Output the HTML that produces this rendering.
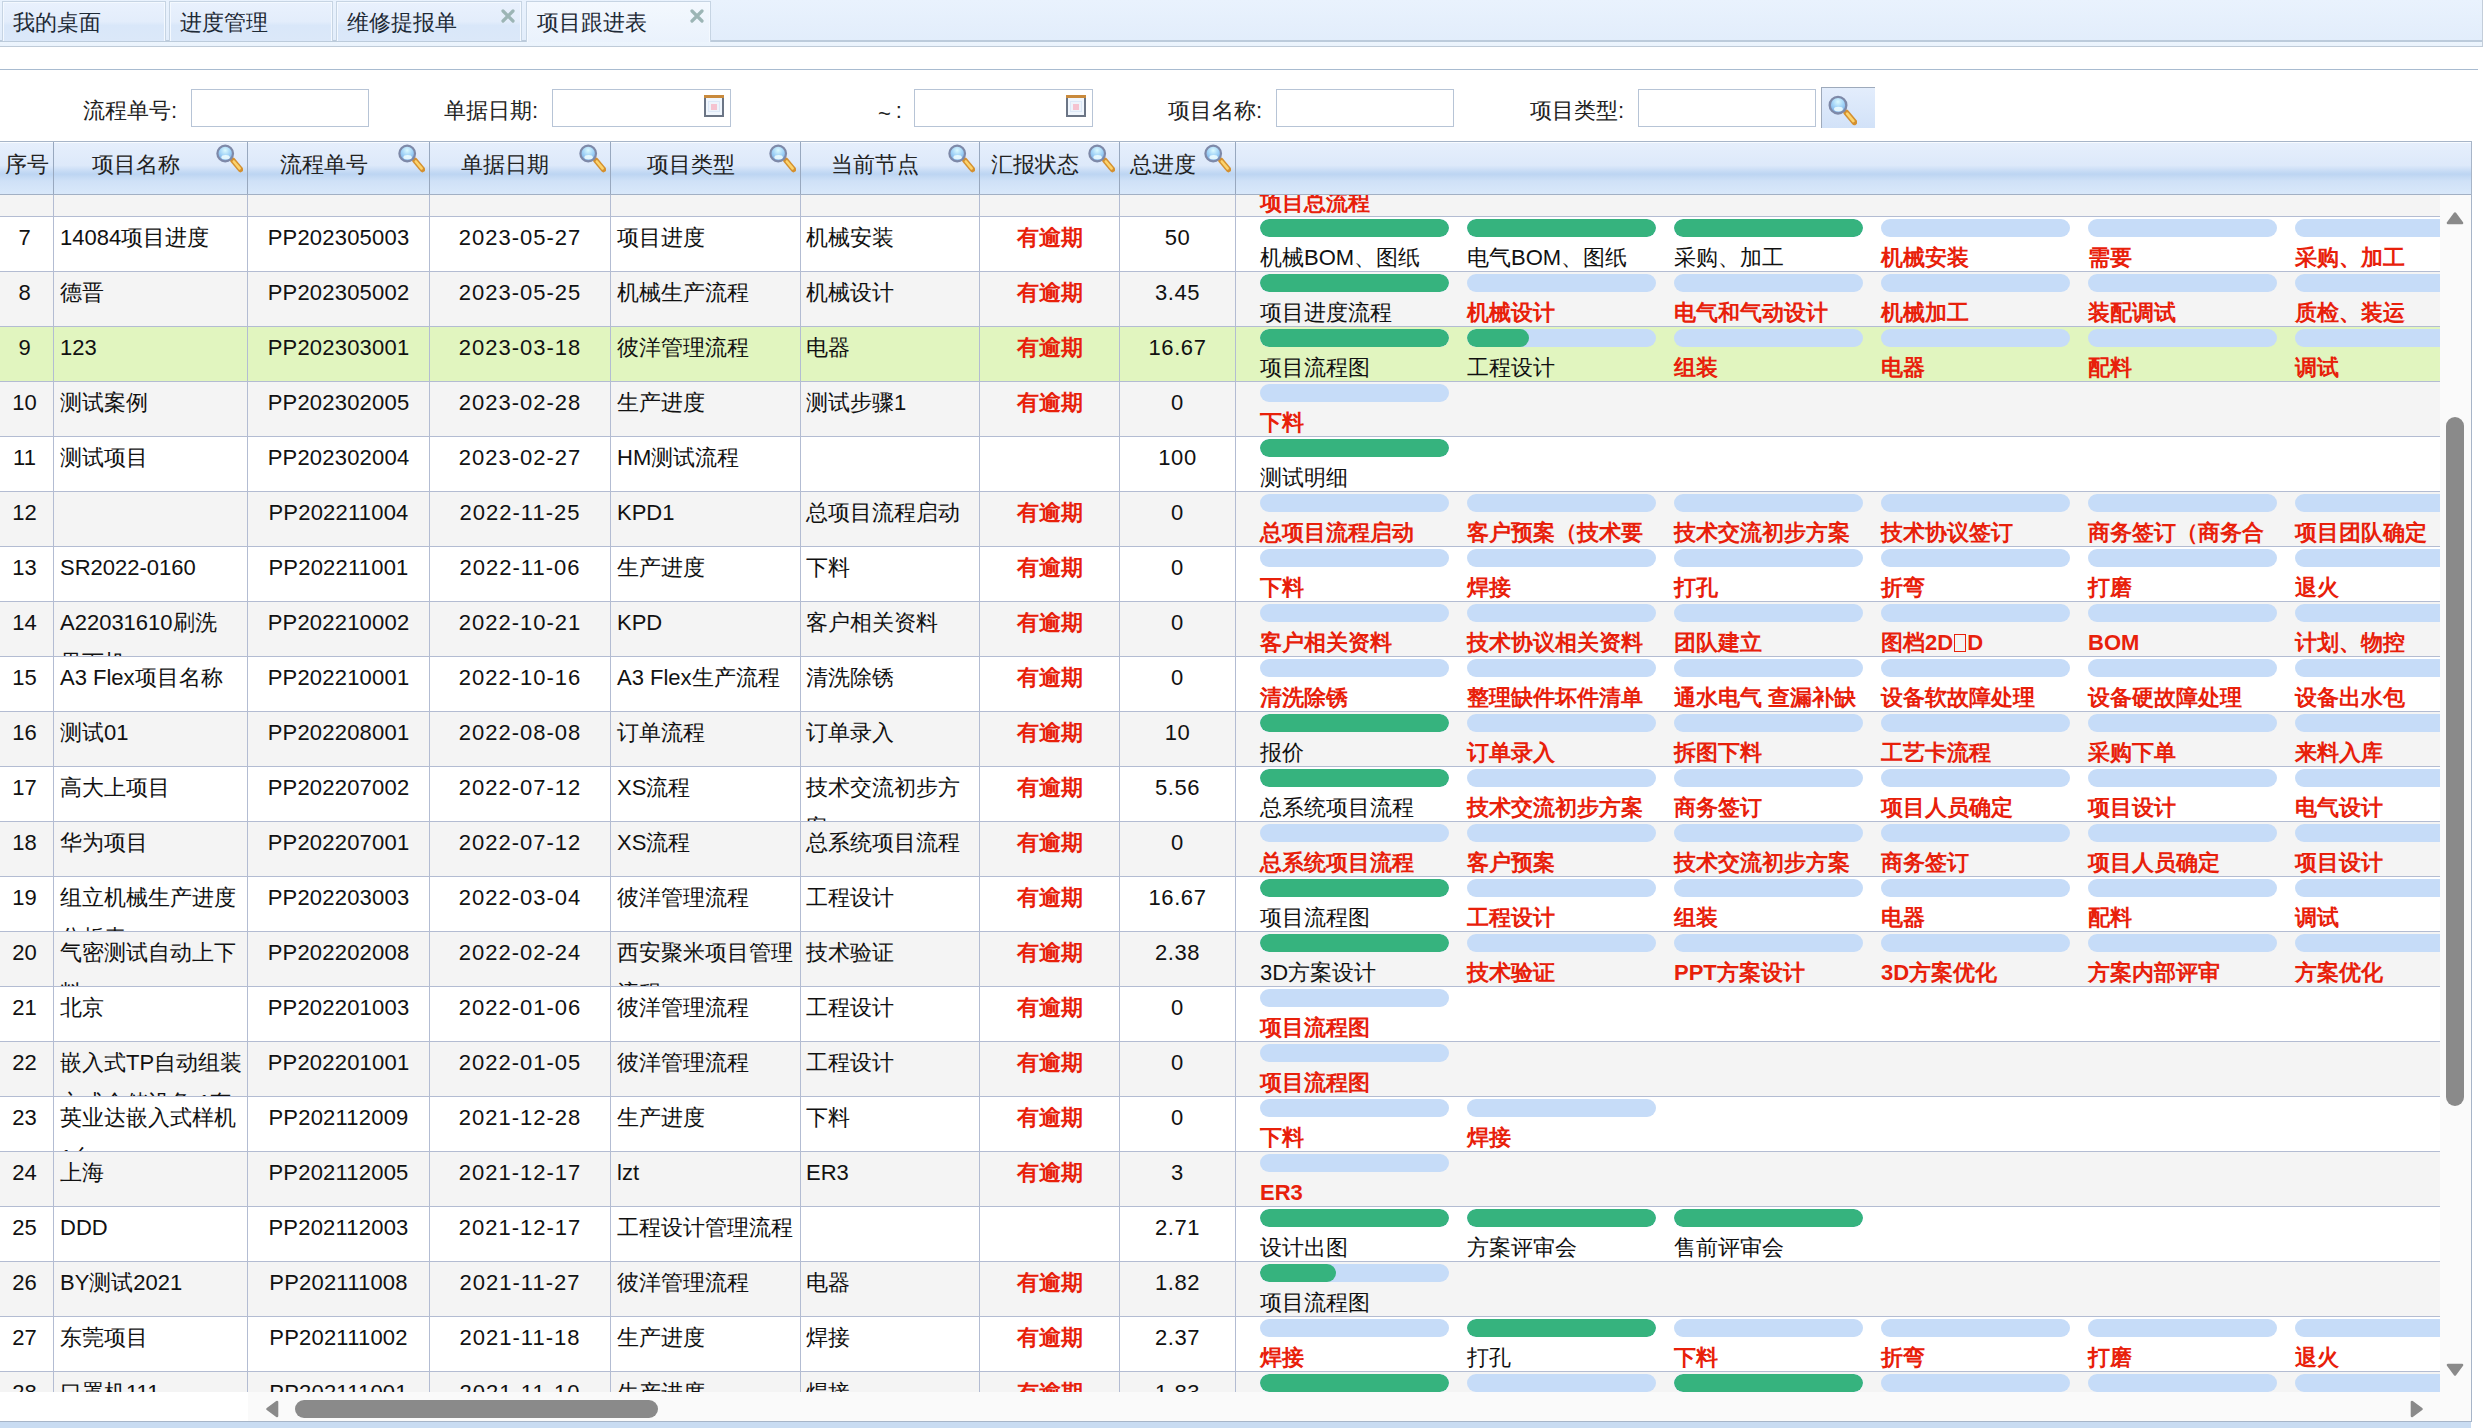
<!DOCTYPE html><html><head><meta charset="utf-8"><style>*{margin:0;padding:0;box-sizing:content-box}
html,body{width:2483px;height:1428px;overflow:hidden;background:#fff;font-family:"Liberation Sans",sans-serif;font-size:22px;color:#222;position:relative}
.abs{position:absolute}
#tabbar{position:absolute;left:0;top:0;width:2483px;height:46px;background:linear-gradient(#e9f2fd 0%,#e2edfb 88%,#bccbdb 88%,#bccbdb 91%,#edf5fd 91%,#eaf3fc 100%);border-bottom:1px solid #bfcbd8}
.tab{position:absolute;top:1px;height:39px;border:1px solid #c6d4e3;border-bottom:none;box-shadow:inset 1px 1px 0 #f4f9ff,inset -1px 0 0 #f4f9ff;background:linear-gradient(#e9f1fd 0%,#e3edfb 50%,#d9e7f9 60%,#dbe8f9 100%);font-size:22px;line-height:38px;color:#1e2a36}
.tab span{position:absolute;left:10px;top:2px}
.tab.act{height:40px;background:linear-gradient(#f3f8fe,#eaf2fc)}
.tab .x{position:absolute;top:7px;width:14px;height:14px}
#hline{position:absolute;left:0;top:69px;width:2478px;height:1px;background:#a8bbd0}
.flab{position:absolute;top:97px;font-size:22px;line-height:28px;color:#222}
.finp{position:absolute;top:89px;height:36px;border:1px solid #b7c4d6;background:#fff}
#grid{position:absolute;left:0;top:141px;width:2471px;height:1279px;border-top:1px solid #a7b5c8;border-right:1px solid #a7b5c8;border-bottom:1px solid #a7b5c8}
#hdr{position:absolute;left:0;top:142px;width:2471px;height:52px;border-bottom:1px solid #a2b0c4;box-shadow:inset 0 1px 0 #f8fbff;background:linear-gradient(#e6effc 0%,#dde9fa 45%,#c3d9f4 58%,#bdd5f2 62%,#cfe1f7 75%,#d9e8fa 100%)}
.h{position:absolute;top:0;height:52px;line-height:46px;text-align:center;border-right:1px solid #98a8bf;font-size:22px;color:#222}
.h span{position:absolute;top:0;}
.mg{position:absolute;top:2px;width:30px;height:30px}
#body{position:absolute;left:0;top:195px;width:2440px;height:1197px;overflow:hidden}
.row{position:absolute;left:0;width:2440px;height:54px;border-bottom:1px solid #b3bcd2;background:#fff}
.row.alt{background:#f4f4f4}
.row.sel{background:#e1f5bf}
.c{position:absolute;top:0;height:53px;padding-top:1px;overflow:hidden;border-right:1px solid #b3bcd2;line-height:40px;font-size:22px;color:#111;white-space:nowrap}
.c0{left:0;width:49px;padding-right:4px;text-align:center}
.c1{left:54px;width:180px;padding-left:6px;padding-right:7px}
.c2{left:248px;width:181px;text-align:center;letter-spacing:0.2px}
.c3{left:430px;width:180px;text-align:center;letter-spacing:1px}
.c4{left:611px;width:183px;padding-left:6px}
.c5{left:801px;width:173px;padding-left:5px}
.c6{left:980px;width:139px;text-align:center;color:#e8200a;font-weight:bold}
.c7{left:1120px;width:115px;text-align:center;letter-spacing:0.6px}
.st{position:absolute;top:2px;width:189px}
.bar{position:absolute;left:0;top:0;width:189px;height:18px;border-radius:9px;background:#c6dcf8;overflow:hidden}
.bar i{position:absolute;left:0;top:0;height:18px;border-radius:9px;background:#36b37e}
.lab{position:absolute;left:0;top:24px;white-space:nowrap;font-size:22px;line-height:30px;color:#111}
.lab.red{color:#e8200a;font-weight:bold}
.tofu{display:inline-block;width:12px;height:18px;border:1px solid #e8200a;box-sizing:border-box;vertical-align:-2px;margin:0 1px}
#vsb{position:absolute;left:2440px;top:195px;width:31px;height:1226px;background:#fafafa}
#hsb{position:absolute;left:0;top:1392px;width:2440px;height:29px;background:linear-gradient(90deg,#fff 248px,#fafafa 248px)}
#bblue{position:absolute;left:0;top:1422px;width:2471px;height:6px;background:#c9dcf2}
</style></head><body>
<svg width="0" height="0" style="position:absolute"><defs><radialGradient id="lg" cx="0.5" cy="0.3" r="0.7"><stop offset="0" stop-color="#dcfaff"/><stop offset="0.55" stop-color="#9ccff6"/><stop offset="1" stop-color="#7aa6dc"/></radialGradient></defs></svg>
<div id="tabbar">
 <div class="tab" style="left:2px;width:162px"><span>我的桌面</span></div>
 <div class="tab" style="left:169px;width:162px"><span>进度管理</span></div>
 <div class="tab" style="left:336px;width:184px"><span>维修提报单</span><svg class="x" style="left:164px" viewBox="0 0 14 14"><path d="M2 2L12 12M12 2L2 12" stroke="#9cb5b5" stroke-width="3.2" stroke-linecap="round"/></svg></div>
 <div class="tab act" style="left:526px;width:183px"><span>项目跟进表</span><svg class="x" style="left:163px" viewBox="0 0 14 14"><path d="M2 2L12 12M12 2L2 12" stroke="#9cb5b5" stroke-width="3.2" stroke-linecap="round"/></svg></div>
 <div style="position:absolute;left:2482px;top:0;width:1px;height:46px;background:#c3cdd9"></div>
</div>
<div id="hline"></div>
<div class="flab" style="left:83px">流程单号:</div>
<div class="finp" style="left:191px;width:176px"></div>
<div class="flab" style="left:444px">单据日期:</div>
<div class="finp" style="left:552px;width:177px"><svg style="position:absolute;left:151px;top:5px" width="20" height="22" viewBox="0 0 20 22"><rect width="20" height="22" fill="#6b7585"/><rect width="20" height="3" fill="#c98a3c"/><rect x="2" y="3" width="16" height="17" fill="#f0f6fd"/><rect x="4" y="6" width="12" height="11" fill="#dce8f7"/><rect x="5" y="7" width="10" height="9" fill="#eef4fb"/><rect x="7" y="9" width="6" height="6" fill="#f5c3d0"/></svg></div>
<div class="flab" style="left:878px"><span style="position:relative;top:3px">~</span><span style="margin-left:5px">:</span></div>
<div class="finp" style="left:914px;width:177px"><svg style="position:absolute;left:151px;top:5px" width="20" height="22" viewBox="0 0 20 22"><rect width="20" height="22" fill="#6b7585"/><rect width="20" height="3" fill="#c98a3c"/><rect x="2" y="3" width="16" height="17" fill="#f0f6fd"/><rect x="4" y="6" width="12" height="11" fill="#dce8f7"/><rect x="5" y="7" width="10" height="9" fill="#eef4fb"/><rect x="7" y="9" width="6" height="6" fill="#f5c3d0"/></svg></div>
<div class="flab" style="left:1168px">项目名称:</div>
<div class="finp" style="left:1276px;width:176px"></div>
<div class="flab" style="left:1530px">项目类型:</div>
<div class="finp" style="left:1638px;width:176px"></div>
<div class="abs" style="left:1821px;top:87px;width:53px;height:40px;border-top:1px solid #9eaabb;border-left:1px solid #9eaabb;background:linear-gradient(#e3edfc,#d2e2f8)"><svg style="position:absolute;left:3px;top:7px;width:32px;height:32px" viewBox="0 0 30 30"><path d="M20 16.5L27.5 25.5" stroke="#d49030" stroke-width="5.5" stroke-linecap="round"/><path d="M20.8 17.5L26.6 24.4" stroke="#fcd36c" stroke-width="2.6" stroke-linecap="round"/><circle cx="12.2" cy="9.5" r="7.8" fill="url(#lg)" stroke="#7e89a8" stroke-width="2.2"/><ellipse cx="12.6" cy="13.2" rx="4.2" ry="2.2" fill="#f2ffff" opacity="0.85"/></svg></div>
<div id="grid"></div>
<div id="hdr">
 <div class="h" style="left:0;width:53px">序号</div>
 <div class="h" style="left:54px;width:163px;padding-right:30px">项目名称<svg class="mg" style="right:4px" viewBox="0 0 30 30"><path d="M20 16.5L27.5 25.5" stroke="#d49030" stroke-width="5.5" stroke-linecap="round"/><path d="M20.8 17.5L26.6 24.4" stroke="#fcd36c" stroke-width="2.6" stroke-linecap="round"/><circle cx="12.2" cy="9.5" r="7.8" fill="url(#lg)" stroke="#7e89a8" stroke-width="2.2"/><ellipse cx="12.6" cy="13.2" rx="4.2" ry="2.2" fill="#f2ffff" opacity="0.85"/></svg></div>
 <div class="h" style="left:248px;width:151px;padding-right:30px">流程单号<svg class="mg" style="right:4px" viewBox="0 0 30 30"><path d="M20 16.5L27.5 25.5" stroke="#d49030" stroke-width="5.5" stroke-linecap="round"/><path d="M20.8 17.5L26.6 24.4" stroke="#fcd36c" stroke-width="2.6" stroke-linecap="round"/><circle cx="12.2" cy="9.5" r="7.8" fill="url(#lg)" stroke="#7e89a8" stroke-width="2.2"/><ellipse cx="12.6" cy="13.2" rx="4.2" ry="2.2" fill="#f2ffff" opacity="0.85"/></svg></div>
 <div class="h" style="left:430px;width:150px;padding-right:30px">单据日期<svg class="mg" style="right:4px" viewBox="0 0 30 30"><path d="M20 16.5L27.5 25.5" stroke="#d49030" stroke-width="5.5" stroke-linecap="round"/><path d="M20.8 17.5L26.6 24.4" stroke="#fcd36c" stroke-width="2.6" stroke-linecap="round"/><circle cx="12.2" cy="9.5" r="7.8" fill="url(#lg)" stroke="#7e89a8" stroke-width="2.2"/><ellipse cx="12.6" cy="13.2" rx="4.2" ry="2.2" fill="#f2ffff" opacity="0.85"/></svg></div>
 <div class="h" style="left:611px;width:159px;padding-right:30px">项目类型<svg class="mg" style="right:4px" viewBox="0 0 30 30"><path d="M20 16.5L27.5 25.5" stroke="#d49030" stroke-width="5.5" stroke-linecap="round"/><path d="M20.8 17.5L26.6 24.4" stroke="#fcd36c" stroke-width="2.6" stroke-linecap="round"/><circle cx="12.2" cy="9.5" r="7.8" fill="url(#lg)" stroke="#7e89a8" stroke-width="2.2"/><ellipse cx="12.6" cy="13.2" rx="4.2" ry="2.2" fill="#f2ffff" opacity="0.85"/></svg></div>
 <div class="h" style="left:801px;width:148px;padding-right:30px">当前节点<svg class="mg" style="right:4px" viewBox="0 0 30 30"><path d="M20 16.5L27.5 25.5" stroke="#d49030" stroke-width="5.5" stroke-linecap="round"/><path d="M20.8 17.5L26.6 24.4" stroke="#fcd36c" stroke-width="2.6" stroke-linecap="round"/><circle cx="12.2" cy="9.5" r="7.8" fill="url(#lg)" stroke="#7e89a8" stroke-width="2.2"/><ellipse cx="12.6" cy="13.2" rx="4.2" ry="2.2" fill="#f2ffff" opacity="0.85"/></svg></div>
 <div class="h" style="left:980px;width:109px;padding-right:30px">汇报状态<svg class="mg" style="right:4px" viewBox="0 0 30 30"><path d="M20 16.5L27.5 25.5" stroke="#d49030" stroke-width="5.5" stroke-linecap="round"/><path d="M20.8 17.5L26.6 24.4" stroke="#fcd36c" stroke-width="2.6" stroke-linecap="round"/><circle cx="12.2" cy="9.5" r="7.8" fill="url(#lg)" stroke="#7e89a8" stroke-width="2.2"/><ellipse cx="12.6" cy="13.2" rx="4.2" ry="2.2" fill="#f2ffff" opacity="0.85"/></svg></div>
 <div class="h" style="left:1120px;width:85px;padding-right:30px">总进度<svg class="mg" style="right:4px" viewBox="0 0 30 30"><path d="M20 16.5L27.5 25.5" stroke="#d49030" stroke-width="5.5" stroke-linecap="round"/><path d="M20.8 17.5L26.6 24.4" stroke="#fcd36c" stroke-width="2.6" stroke-linecap="round"/><circle cx="12.2" cy="9.5" r="7.8" fill="url(#lg)" stroke="#7e89a8" stroke-width="2.2"/><ellipse cx="12.6" cy="13.2" rx="4.2" ry="2.2" fill="#f2ffff" opacity="0.85"/></svg></div>
</div>

<div id="body"><div class="row alt" style="top:-33px">
<div class="c c0"></div>
<div class="c c1"></div>
<div class="c c2"></div>
<div class="c c3"></div>
<div class="c c4"></div>
<div class="c c5"></div>
<div class="c c6"></div>
<div class="c c7"></div>
<div class="st" style="left:1260px"><div class="bar"></div><div class="lab red">项目总流程</div></div>
</div>
<div class="row" style="top:22px">
<div class="c c0">7</div>
<div class="c c1">14084项目进度</div>
<div class="c c2">PP202305003</div>
<div class="c c3">2023-05-27</div>
<div class="c c4">项目进度</div>
<div class="c c5">机械安装</div>
<div class="c c6">有逾期</div>
<div class="c c7">50</div>
<div class="st" style="left:1260px"><div class="bar"><i style="width:100%"></i></div><div class="lab">机械BOM、图纸</div></div>
<div class="st" style="left:1467px"><div class="bar"><i style="width:100%"></i></div><div class="lab">电气BOM、图纸</div></div>
<div class="st" style="left:1674px"><div class="bar"><i style="width:100%"></i></div><div class="lab">采购、加工</div></div>
<div class="st" style="left:1881px"><div class="bar"></div><div class="lab red">机械安装</div></div>
<div class="st" style="left:2088px"><div class="bar"></div><div class="lab red">需要</div></div>
<div class="st" style="left:2295px"><div class="bar"></div><div class="lab red">采购、加工</div></div>
</div>
<div class="row alt" style="top:77px">
<div class="c c0">8</div>
<div class="c c1">德晋</div>
<div class="c c2">PP202305002</div>
<div class="c c3">2023-05-25</div>
<div class="c c4">机械生产流程</div>
<div class="c c5">机械设计</div>
<div class="c c6">有逾期</div>
<div class="c c7">3.45</div>
<div class="st" style="left:1260px"><div class="bar"><i style="width:100%"></i></div><div class="lab">项目进度流程</div></div>
<div class="st" style="left:1467px"><div class="bar"></div><div class="lab red">机械设计</div></div>
<div class="st" style="left:1674px"><div class="bar"></div><div class="lab red">电气和气动设计</div></div>
<div class="st" style="left:1881px"><div class="bar"></div><div class="lab red">机械加工</div></div>
<div class="st" style="left:2088px"><div class="bar"></div><div class="lab red">装配调试</div></div>
<div class="st" style="left:2295px"><div class="bar"></div><div class="lab red">质检、装运</div></div>
</div>
<div class="row sel" style="top:132px">
<div class="c c0">9</div>
<div class="c c1">123</div>
<div class="c c2">PP202303001</div>
<div class="c c3">2023-03-18</div>
<div class="c c4">彼洋管理流程</div>
<div class="c c5">电器</div>
<div class="c c6">有逾期</div>
<div class="c c7">16.67</div>
<div class="st" style="left:1260px"><div class="bar"><i style="width:100%"></i></div><div class="lab">项目流程图</div></div>
<div class="st" style="left:1467px"><div class="bar"><i style="width:33%"></i></div><div class="lab">工程设计</div></div>
<div class="st" style="left:1674px"><div class="bar"></div><div class="lab red">组装</div></div>
<div class="st" style="left:1881px"><div class="bar"></div><div class="lab red">电器</div></div>
<div class="st" style="left:2088px"><div class="bar"></div><div class="lab red">配料</div></div>
<div class="st" style="left:2295px"><div class="bar"></div><div class="lab red">调试</div></div>
</div>
<div class="row alt" style="top:187px">
<div class="c c0">10</div>
<div class="c c1">测试案例</div>
<div class="c c2">PP202302005</div>
<div class="c c3">2023-02-28</div>
<div class="c c4">生产进度</div>
<div class="c c5">测试步骤1</div>
<div class="c c6">有逾期</div>
<div class="c c7">0</div>
<div class="st" style="left:1260px"><div class="bar"></div><div class="lab red">下料</div></div>
</div>
<div class="row" style="top:242px">
<div class="c c0">11</div>
<div class="c c1">测试项目</div>
<div class="c c2">PP202302004</div>
<div class="c c3">2023-02-27</div>
<div class="c c4">HM测试流程</div>
<div class="c c5"></div>
<div class="c c6"></div>
<div class="c c7">100</div>
<div class="st" style="left:1260px"><div class="bar"><i style="width:100%"></i></div><div class="lab">测试明细</div></div>
</div>
<div class="row alt" style="top:297px">
<div class="c c0">12</div>
<div class="c c1"></div>
<div class="c c2">PP202211004</div>
<div class="c c3">2022-11-25</div>
<div class="c c4">KPD1</div>
<div class="c c5">总项目流程启动</div>
<div class="c c6">有逾期</div>
<div class="c c7">0</div>
<div class="st" style="left:1260px"><div class="bar"></div><div class="lab red">总项目流程启动</div></div>
<div class="st" style="left:1467px"><div class="bar"></div><div class="lab red">客户预案（技术要</div></div>
<div class="st" style="left:1674px"><div class="bar"></div><div class="lab red">技术交流初步方案</div></div>
<div class="st" style="left:1881px"><div class="bar"></div><div class="lab red">技术协议签订</div></div>
<div class="st" style="left:2088px"><div class="bar"></div><div class="lab red">商务签订（商务合</div></div>
<div class="st" style="left:2295px"><div class="bar"></div><div class="lab red">项目团队确定</div></div>
</div>
<div class="row" style="top:352px">
<div class="c c0">13</div>
<div class="c c1">SR2022-0160</div>
<div class="c c2">PP202211001</div>
<div class="c c3">2022-11-06</div>
<div class="c c4">生产进度</div>
<div class="c c5">下料</div>
<div class="c c6">有逾期</div>
<div class="c c7">0</div>
<div class="st" style="left:1260px"><div class="bar"></div><div class="lab red">下料</div></div>
<div class="st" style="left:1467px"><div class="bar"></div><div class="lab red">焊接</div></div>
<div class="st" style="left:1674px"><div class="bar"></div><div class="lab red">打孔</div></div>
<div class="st" style="left:1881px"><div class="bar"></div><div class="lab red">折弯</div></div>
<div class="st" style="left:2088px"><div class="bar"></div><div class="lab red">打磨</div></div>
<div class="st" style="left:2295px"><div class="bar"></div><div class="lab red">退火</div></div>
</div>
<div class="row alt" style="top:407px">
<div class="c c0">14</div>
<div class="c c1">A22031610刷洗<br>果下机</div>
<div class="c c2">PP202210002</div>
<div class="c c3">2022-10-21</div>
<div class="c c4">KPD</div>
<div class="c c5">客户相关资料</div>
<div class="c c6">有逾期</div>
<div class="c c7">0</div>
<div class="st" style="left:1260px"><div class="bar"></div><div class="lab red">客户相关资料</div></div>
<div class="st" style="left:1467px"><div class="bar"></div><div class="lab red">技术协议相关资料</div></div>
<div class="st" style="left:1674px"><div class="bar"></div><div class="lab red">团队建立</div></div>
<div class="st" style="left:1881px"><div class="bar"></div><div class="lab red">图档2D<span class="tofu"></span>D</div></div>
<div class="st" style="left:2088px"><div class="bar"></div><div class="lab red">BOM</div></div>
<div class="st" style="left:2295px"><div class="bar"></div><div class="lab red">计划、物控</div></div>
</div>
<div class="row" style="top:462px">
<div class="c c0">15</div>
<div class="c c1">A3 Flex项目名称</div>
<div class="c c2">PP202210001</div>
<div class="c c3">2022-10-16</div>
<div class="c c4">A3 Flex生产流程</div>
<div class="c c5">清洗除锈</div>
<div class="c c6">有逾期</div>
<div class="c c7">0</div>
<div class="st" style="left:1260px"><div class="bar"></div><div class="lab red">清洗除锈</div></div>
<div class="st" style="left:1467px"><div class="bar"></div><div class="lab red">整理缺件坏件清单</div></div>
<div class="st" style="left:1674px"><div class="bar"></div><div class="lab red">通水电气 查漏补缺</div></div>
<div class="st" style="left:1881px"><div class="bar"></div><div class="lab red">设备软故障处理</div></div>
<div class="st" style="left:2088px"><div class="bar"></div><div class="lab red">设备硬故障处理</div></div>
<div class="st" style="left:2295px"><div class="bar"></div><div class="lab red">设备出水包</div></div>
</div>
<div class="row alt" style="top:517px">
<div class="c c0">16</div>
<div class="c c1">测试01</div>
<div class="c c2">PP202208001</div>
<div class="c c3">2022-08-08</div>
<div class="c c4">订单流程</div>
<div class="c c5">订单录入</div>
<div class="c c6">有逾期</div>
<div class="c c7">10</div>
<div class="st" style="left:1260px"><div class="bar"><i style="width:100%"></i></div><div class="lab">报价</div></div>
<div class="st" style="left:1467px"><div class="bar"></div><div class="lab red">订单录入</div></div>
<div class="st" style="left:1674px"><div class="bar"></div><div class="lab red">拆图下料</div></div>
<div class="st" style="left:1881px"><div class="bar"></div><div class="lab red">工艺卡流程</div></div>
<div class="st" style="left:2088px"><div class="bar"></div><div class="lab red">采购下单</div></div>
<div class="st" style="left:2295px"><div class="bar"></div><div class="lab red">来料入库</div></div>
</div>
<div class="row" style="top:572px">
<div class="c c0">17</div>
<div class="c c1">高大上项目</div>
<div class="c c2">PP202207002</div>
<div class="c c3">2022-07-12</div>
<div class="c c4">XS流程</div>
<div class="c c5">技术交流初步方<br>案</div>
<div class="c c6">有逾期</div>
<div class="c c7">5.56</div>
<div class="st" style="left:1260px"><div class="bar"><i style="width:100%"></i></div><div class="lab">总系统项目流程</div></div>
<div class="st" style="left:1467px"><div class="bar"></div><div class="lab red">技术交流初步方案</div></div>
<div class="st" style="left:1674px"><div class="bar"></div><div class="lab red">商务签订</div></div>
<div class="st" style="left:1881px"><div class="bar"></div><div class="lab red">项目人员确定</div></div>
<div class="st" style="left:2088px"><div class="bar"></div><div class="lab red">项目设计</div></div>
<div class="st" style="left:2295px"><div class="bar"></div><div class="lab red">电气设计</div></div>
</div>
<div class="row alt" style="top:627px">
<div class="c c0">18</div>
<div class="c c1">华为项目</div>
<div class="c c2">PP202207001</div>
<div class="c c3">2022-07-12</div>
<div class="c c4">XS流程</div>
<div class="c c5">总系统项目流程</div>
<div class="c c6">有逾期</div>
<div class="c c7">0</div>
<div class="st" style="left:1260px"><div class="bar"></div><div class="lab red">总系统项目流程</div></div>
<div class="st" style="left:1467px"><div class="bar"></div><div class="lab red">客户预案</div></div>
<div class="st" style="left:1674px"><div class="bar"></div><div class="lab red">技术交流初步方案</div></div>
<div class="st" style="left:1881px"><div class="bar"></div><div class="lab red">商务签订</div></div>
<div class="st" style="left:2088px"><div class="bar"></div><div class="lab red">项目人员确定</div></div>
<div class="st" style="left:2295px"><div class="bar"></div><div class="lab red">项目设计</div></div>
</div>
<div class="row" style="top:682px">
<div class="c c0">19</div>
<div class="c c1">组立机械生产进度<br>分析表</div>
<div class="c c2">PP202203003</div>
<div class="c c3">2022-03-04</div>
<div class="c c4">彼洋管理流程</div>
<div class="c c5">工程设计</div>
<div class="c c6">有逾期</div>
<div class="c c7">16.67</div>
<div class="st" style="left:1260px"><div class="bar"><i style="width:100%"></i></div><div class="lab">项目流程图</div></div>
<div class="st" style="left:1467px"><div class="bar"></div><div class="lab red">工程设计</div></div>
<div class="st" style="left:1674px"><div class="bar"></div><div class="lab red">组装</div></div>
<div class="st" style="left:1881px"><div class="bar"></div><div class="lab red">电器</div></div>
<div class="st" style="left:2088px"><div class="bar"></div><div class="lab red">配料</div></div>
<div class="st" style="left:2295px"><div class="bar"></div><div class="lab red">调试</div></div>
</div>
<div class="row alt" style="top:737px">
<div class="c c0">20</div>
<div class="c c1">气密测试自动上下<br>料</div>
<div class="c c2">PP202202008</div>
<div class="c c3">2022-02-24</div>
<div class="c c4">西安聚米项目管理<br>流程</div>
<div class="c c5">技术验证</div>
<div class="c c6">有逾期</div>
<div class="c c7">2.38</div>
<div class="st" style="left:1260px"><div class="bar"><i style="width:100%"></i></div><div class="lab">3D方案设计</div></div>
<div class="st" style="left:1467px"><div class="bar"></div><div class="lab red">技术验证</div></div>
<div class="st" style="left:1674px"><div class="bar"></div><div class="lab red">PPT方案设计</div></div>
<div class="st" style="left:1881px"><div class="bar"></div><div class="lab red">3D方案优化</div></div>
<div class="st" style="left:2088px"><div class="bar"></div><div class="lab red">方案内部评审</div></div>
<div class="st" style="left:2295px"><div class="bar"></div><div class="lab red">方案优化</div></div>
</div>
<div class="row" style="top:792px">
<div class="c c0">21</div>
<div class="c c1">北京</div>
<div class="c c2">PP202201003</div>
<div class="c c3">2022-01-06</div>
<div class="c c4">彼洋管理流程</div>
<div class="c c5">工程设计</div>
<div class="c c6">有逾期</div>
<div class="c c7">0</div>
<div class="st" style="left:1260px"><div class="bar"></div><div class="lab red">项目流程图</div></div>
</div>
<div class="row alt" style="top:847px">
<div class="c c0">22</div>
<div class="c c1">嵌入式TP自动组装<br>立式全储设备 1套</div>
<div class="c c2">PP202201001</div>
<div class="c c3">2022-01-05</div>
<div class="c c4">彼洋管理流程</div>
<div class="c c5">工程设计</div>
<div class="c c6">有逾期</div>
<div class="c c7">0</div>
<div class="st" style="left:1260px"><div class="bar"></div><div class="lab red">项目流程图</div></div>
</div>
<div class="row" style="top:902px">
<div class="c c0">23</div>
<div class="c c1">英业达嵌入式样机<br>1台</div>
<div class="c c2">PP202112009</div>
<div class="c c3">2021-12-28</div>
<div class="c c4">生产进度</div>
<div class="c c5">下料</div>
<div class="c c6">有逾期</div>
<div class="c c7">0</div>
<div class="st" style="left:1260px"><div class="bar"></div><div class="lab red">下料</div></div>
<div class="st" style="left:1467px"><div class="bar"></div><div class="lab red">焊接</div></div>
</div>
<div class="row alt" style="top:957px">
<div class="c c0">24</div>
<div class="c c1">上海</div>
<div class="c c2">PP202112005</div>
<div class="c c3">2021-12-17</div>
<div class="c c4">lzt</div>
<div class="c c5">ER3</div>
<div class="c c6">有逾期</div>
<div class="c c7">3</div>
<div class="st" style="left:1260px"><div class="bar"></div><div class="lab red">ER3</div></div>
</div>
<div class="row" style="top:1012px">
<div class="c c0">25</div>
<div class="c c1">DDD</div>
<div class="c c2">PP202112003</div>
<div class="c c3">2021-12-17</div>
<div class="c c4">工程设计管理流程</div>
<div class="c c5"></div>
<div class="c c6"></div>
<div class="c c7">2.71</div>
<div class="st" style="left:1260px"><div class="bar"><i style="width:100%"></i></div><div class="lab">设计出图</div></div>
<div class="st" style="left:1467px"><div class="bar"><i style="width:100%"></i></div><div class="lab">方案评审会</div></div>
<div class="st" style="left:1674px"><div class="bar"><i style="width:100%"></i></div><div class="lab">售前评审会</div></div>
</div>
<div class="row alt" style="top:1067px">
<div class="c c0">26</div>
<div class="c c1">BY测试2021</div>
<div class="c c2">PP202111008</div>
<div class="c c3">2021-11-27</div>
<div class="c c4">彼洋管理流程</div>
<div class="c c5">电器</div>
<div class="c c6">有逾期</div>
<div class="c c7">1.82</div>
<div class="st" style="left:1260px"><div class="bar"><i style="width:40%"></i></div><div class="lab">项目流程图</div></div>
</div>
<div class="row" style="top:1122px">
<div class="c c0">27</div>
<div class="c c1">东莞项目</div>
<div class="c c2">PP202111002</div>
<div class="c c3">2021-11-18</div>
<div class="c c4">生产进度</div>
<div class="c c5">焊接</div>
<div class="c c6">有逾期</div>
<div class="c c7">2.37</div>
<div class="st" style="left:1260px"><div class="bar"></div><div class="lab red">焊接</div></div>
<div class="st" style="left:1467px"><div class="bar"><i style="width:100%"></i></div><div class="lab">打孔</div></div>
<div class="st" style="left:1674px"><div class="bar"></div><div class="lab red">下料</div></div>
<div class="st" style="left:1881px"><div class="bar"></div><div class="lab red">折弯</div></div>
<div class="st" style="left:2088px"><div class="bar"></div><div class="lab red">打磨</div></div>
<div class="st" style="left:2295px"><div class="bar"></div><div class="lab red">退火</div></div>
</div>
<div class="row alt" style="top:1177px">
<div class="c c0">28</div>
<div class="c c1">口罩机111</div>
<div class="c c2">PP202111001</div>
<div class="c c3">2021-11-10</div>
<div class="c c4">生产进度</div>
<div class="c c5">焊接</div>
<div class="c c6">有逾期</div>
<div class="c c7">1.83</div>
<div class="st" style="left:1260px"><div class="bar"><i style="width:100%"></i></div><div class="lab red"></div></div>
<div class="st" style="left:1467px"><div class="bar"></div><div class="lab red"></div></div>
<div class="st" style="left:1674px"><div class="bar"><i style="width:100%"></i></div><div class="lab red"></div></div>
<div class="st" style="left:1881px"><div class="bar"></div><div class="lab red"></div></div>
<div class="st" style="left:2088px"><div class="bar"></div><div class="lab red"></div></div>
<div class="st" style="left:2295px"><div class="bar"></div><div class="lab red"></div></div>
</div></div>
<div id="vsb">
 <svg style="position:absolute;left:6px;top:16px" width="18" height="14" viewBox="0 0 18 14"><path d="M9 2.5L16 12H2Z" fill="#8a8a8a" stroke="#8a8a8a" stroke-width="2.6" stroke-linejoin="round"/></svg>
 <div style="position:absolute;left:6px;top:222px;width:18px;height:689px;border-radius:9px;background:#8a8a8a"></div>
 <svg style="position:absolute;left:6px;top:1168px" width="18" height="14" viewBox="0 0 18 14"><path d="M2 2H16L9 11.5Z" fill="#8a8a8a" stroke="#8a8a8a" stroke-width="2.6" stroke-linejoin="round"/></svg>
</div>
<div id="hsb">
 <svg style="position:absolute;left:265px;top:8px" width="14" height="18" viewBox="0 0 14 18"><path d="M12 2V16L2.5 9Z" fill="#8a8a8a" stroke="#8a8a8a" stroke-width="2.6" stroke-linejoin="round"/></svg>
 <div style="position:absolute;left:295px;top:8px;width:363px;height:18px;border-radius:9px;background:#8a8a8a"></div>
 <svg style="position:absolute;left:2410px;top:8px" width="14" height="18" viewBox="0 0 14 18"><path d="M2 2V16L11.5 9Z" fill="#8a8a8a" stroke="#8a8a8a" stroke-width="2.6" stroke-linejoin="round"/></svg>
</div>
<div id="bblue"></div>

</body></html>
